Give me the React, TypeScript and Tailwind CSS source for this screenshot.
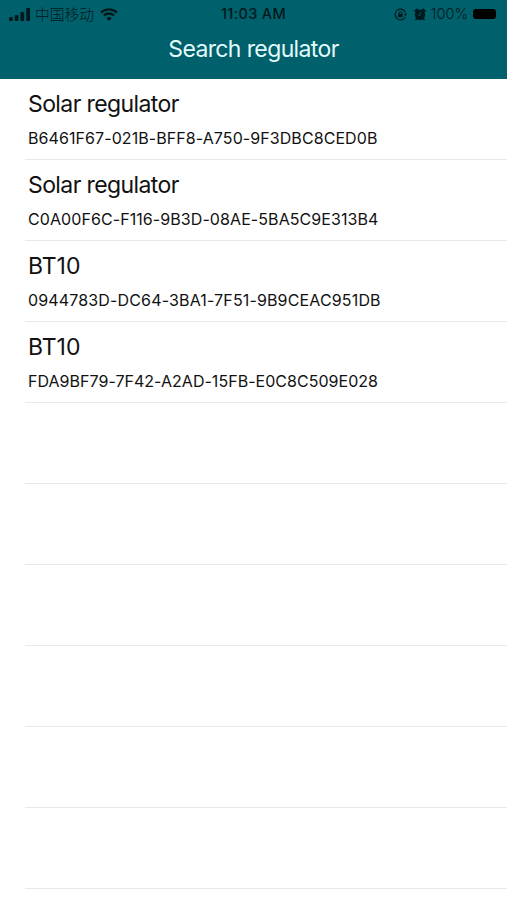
interface Regulator {
  name: string;
  uuid: string;
  nameClass: string;
  uuidClass: string;
}

const REGULATORS: Regulator[] = [
  {
    name: "Solar regulator",
    uuid: "B6461F67-021B-BFF8-A750-9F3DBC8CED0B",
    nameClass: "tracking-[-0.6px]",
    uuidClass: "tracking-[0.08px]",
  },
  {
    name: "Solar regulator",
    uuid: "C0A00F6C-F116-9B3D-08AE-5BA5C9E313B4",
    nameClass: "tracking-[-0.6px]",
    uuidClass: "tracking-[0.08px]",
  },
  {
    name: "BT10",
    uuid: "0944783D-DC64-3BA1-7F51-9B9CEAC951DB",
    nameClass: "tracking-normal",
    uuidClass: "tracking-[0.15px]",
  },
  {
    name: "BT10",
    uuid: "FDA9BF79-7F42-A2AD-15FB-E0C8C509E028",
    nameClass: "tracking-normal",
    uuidClass: "tracking-[0.03px]",
  },
];

const EMPTY_ROWS = 6;

function SignalIcon() {
  return (
    <svg width="21" height="13" viewBox="0 0 21 13" fill="currentColor">
      <rect x="0" y="9" width="3.8" height="4" rx="1" />
      <rect x="5.7" y="7" width="3.8" height="6" rx="1" />
      <rect x="11.4" y="4" width="3.8" height="9" rx="1" />
      <rect x="17.2" y="0" width="3.8" height="13" rx="1" />
    </svg>
  );
}

function WifiIcon() {
  return (
    <svg width="18" height="13" viewBox="0 0 18 13" fill="none" stroke="currentColor">
      <path d="M1 4.6a11.4 11.4 0 0 1 16 0M3.9 7.6a7.2 7.2 0 0 1 10.2 0" strokeWidth="2.3" />
      <path d="m9 13-2.7-2.8a3.9 3.9 0 0 1 5.4 0Z" fill="currentColor" stroke="none" />
    </svg>
  );
}

function RotationLockIcon() {
  return (
    <svg width="13" height="13" viewBox="0 0 13 13" fill="none" stroke="currentColor">
      <path d="M11.6 4.6A5.4 5.4 0 1 0 11.4 9" strokeWidth="1.1" />
      <path d="m9.8 5.8 3.2 0-1.5 2.4Z" fill="currentColor" stroke="none" />
      <rect x="4.1" y="5.8" width="4.6" height="3.4" rx="0.5" fill="currentColor" stroke="none" />
      <path d="M5 6V4.9a1.4 1.4 0 0 1 2.8 0V6" strokeWidth="0.8" />
    </svg>
  );
}

function AlarmIcon() {
  return (
    <svg width="12" height="13" viewBox="0 0 12 13" fill="none" stroke="currentColor">
      <circle cx="6" cy="6.8" r="5.2" fill="currentColor" stroke="none" />
      <path d="M1.3 3 3 1.5M10.7 3 9 1.5" strokeWidth="2" strokeLinecap="round" />
      <path d="m2.6 10.8-.6.9M9.4 10.8l.6.9" strokeWidth="1.4" strokeLinecap="round" />
      <path d="M6.3 4v3.1H4" stroke="#00606b" strokeWidth="0.8" />
    </svg>
  );
}

function StatusBar() {
  return (
    <div className="grid h-7 grid-cols-3 items-center pr-[11px] pl-[9px] text-[#00191d]">
      <div className="flex items-center">
        <SignalIcon />
        <span className="ml-[5px] font-['Noto_Sans_CJK_SC',sans-serif] text-[14.75px] leading-[26px] font-light">
          中国移动
        </span>
        <span className="ml-[6px]">
          <WifiIcon />
        </span>
      </div>
      <span className="pl-[2px] text-center text-[14.5px] font-medium tracking-[0.35px]">
        11:03 AM
      </span>
      <div className="flex items-center justify-end">
        <RotationLockIcon />
        <span className="ml-[7px]">
          <AlarmIcon />
        </span>
        <span className="ml-[5px] text-[14.5px] font-light">100%</span>
        <span className="ml-[5px] h-[10px] w-[23px] rounded-[3px] bg-black" />
      </div>
    </div>
  );
}

export default function App() {
  return (
    <div className="h-[900px] overflow-hidden bg-white font-['Inter',sans-serif]">
      <header className="h-[79px] bg-[#00606b]">
        <StatusBar />
        <h1 className="pt-[5px] text-center text-[23px] leading-8 tracking-[-0.62px] text-[#e2fbfd]">
          Search regulator
        </h1>
      </header>
      <ul>
        {REGULATORS.map((r) => (
          <li key={r.uuid} className="flex h-[81px]">
            <div className="ml-[25px] flex-1 border-b border-[#e9e9e9] pt-[9px] pl-[3px] text-[#111]">
              <span className={`block text-[23px] leading-8 ${r.nameClass}`}>{r.name}</span>
              <span className={`mt-[6px] block text-[16px] leading-6 ${r.uuidClass}`}>
                {r.uuid}
              </span>
            </div>
          </li>
        ))}
        {Array.from({ length: EMPTY_ROWS }, (_, i) => (
          <li key={i} className="ml-[25px] h-[81px] border-b border-[#e9e9e9]" />
        ))}
      </ul>
    </div>
  );
}
